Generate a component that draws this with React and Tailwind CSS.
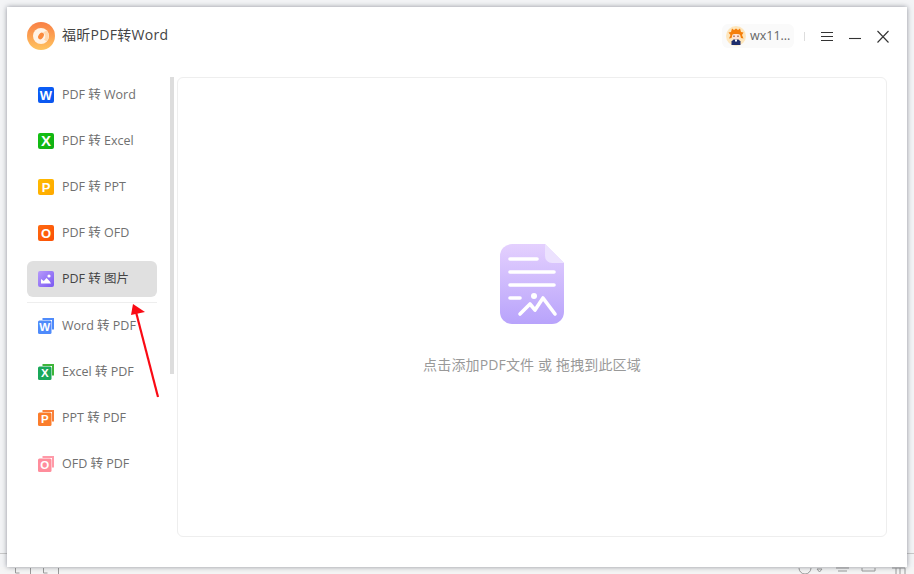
const cjk = { fontFamily: '"Open Sans", "Noto Sans CJK SC", sans-serif' };

const SolidIcon = ({ from, to, letter }) => (
  <svg width="16" height="16" viewBox="0 0 16 16" className="shrink-0">
    <defs>
      <linearGradient id={`solid-${letter}`} x1="0" y1="0" x2="1" y2="1">
        <stop offset="0" stopColor={from} />
        <stop offset="1" stopColor={to} />
      </linearGradient>
    </defs>
    <rect width="16" height="16" rx="2" fill={`url(#solid-${letter})`} />
    <text x="8" y="13" textAnchor="middle" fontSize={letter === 'X' ? 15 : 13} fontWeight="700" fill="#fff" fontFamily="Liberation Sans, sans-serif">{letter}</text>
  </svg>
);

const ImageIcon = () => (
  <svg width="16" height="16" viewBox="0 0 16 16" className="shrink-0">
    <defs>
      <linearGradient id="img-icon" x1="0" y1="0" x2="1" y2="1">
        <stop offset="0" stopColor="#b79bfb" />
        <stop offset="1" stopColor="#7a58f2" />
      </linearGradient>
    </defs>
    <rect width="16" height="16" rx="2" fill="url(#img-icon)" />
    <circle cx="11" cy="5" r="1.600" fill="#fff" />
    <path d="M3 12.500V8l2.800 2L8.500 7l3 3 1.500 2.500z" fill="#fff" />
  </svg>
);

const FrameIcon = ({ color, light, letter }) => (
  <svg width="16" height="16" viewBox="0 0 16 16" className="shrink-0">
    <path d="M4.500 1h10.500v10.500" fill="none" stroke={light} strokeWidth="2" />
    <rect x="0" y="2.500" width="13.500" height="13.500" rx="1.500" fill={color} />
    <text x="6.800" y="13.400" textAnchor="middle" fontSize="11.500" fontWeight="700" fill="#fff" fontFamily="Liberation Sans, sans-serif">{letter}</text>
  </svg>
);

const topItems = [
  { label: 'PDF 转 Word', icon: <SolidIcon from="#0a5ff8" to="#0b55ee" letter="W" /> },
  { label: 'PDF 转 Excel', icon: <SolidIcon from="#14c214" to="#0fae12" letter="X" /> },
  { label: 'PDF 转 PPT', icon: <SolidIcon from="#ffbb00" to="#ffa800" letter="P" /> },
  { label: 'PDF 转 OFD', icon: <SolidIcon from="#ff6a10" to="#fb5005" letter="O" /> },
  { label: 'PDF 转 图片', icon: <ImageIcon />, active: true },
];

const bottomItems = [
  { label: 'Word 转 PDF', icon: <FrameIcon color="#4f8bfb" light="#4f8bfb" letter="W" /> },
  { label: 'Excel 转 PDF', icon: <FrameIcon color="#1aa85a" light="#3fb53a" letter="X" /> },
  { label: 'PPT 转 PDF', icon: <FrameIcon color="#fb7d2c" light="#f9803a" letter="P" /> },
  { label: 'OFD 转 PDF', icon: <FrameIcon color="#ff8d9c" light="#ff9aa8" letter="O" /> },
];

const NavItem = ({ label, icon, active }) => (
  <div className={`flex h-9 w-[130px] items-center gap-2 rounded-md pl-[11px] text-[12.5px] ${active ? 'bg-[#e0e0e0] text-[#444]' : 'text-[#707070]'}`}>
    {icon}
    <span className="whitespace-nowrap">{label}</span>
  </div>
);

const Logo = () => (
  <svg width="28" height="28" viewBox="0 0 28 28" className="shrink-0">
    <defs>
      <linearGradient id="logo-bg" x1="0.5" y1="0" x2="0.5" y2="1">
        <stop offset="0" stopColor="#f97f45" />
        <stop offset="1" stopColor="#ffc45f" />
      </linearGradient>
    </defs>
    <circle cx="14" cy="14" r="14" fill="url(#logo-bg)" />
    <circle cx="14" cy="14" r="8" fill="#fff3e6" />
    <path d="M19.500 8.500a8 8 0 0 1 0 11l-2.500-2a4.500 4.500 0 0 0-1-7z" fill="#ffd9b0" />
    <ellipse cx="14" cy="14" rx="2.400" ry="3.600" transform="rotate(35 14 14)" fill="#fb8a3c" />
  </svg>
);

const Avatar = () => (
  <svg width="20" height="20" viewBox="0 0 20 20" className="shrink-0">
    <circle cx="10" cy="10" r="10" fill="#fde6bd" />
    <path d="M2.500 6.500l2.500-.5 1-3.500 2 1.500 2-1.500 2 1.500 2-1.500 1 3.500 2.500.5-1.500 2.500 1.500 3.500-2.500-.5-1-3.500H6.500l-1 3.500-2.500.5 1.500-3.500z" fill="#f57f0a" />
    <rect x="6.500" y="8" width="7" height="5" rx="2" fill="#ffe3d6" />
    <rect x="7.500" y="9.500" width="1" height="1.500" fill="#7a3b1a" />
    <rect x="11.500" y="9.500" width="1" height="1.500" fill="#7a3b1a" />
    <path d="M5.500 19v-3.500l2-2h5l2 2V19z" fill="#1f2f6e" />
    <rect x="9" y="13.500" width="2" height="2" fill="#fff" />
  </svg>
);

const DocIcon = () => (
  <svg width="64" height="80" viewBox="0 0 64 80">
    <defs>
      <linearGradient id="doc-bg" x1="0.5" y1="0" x2="0.5" y2="1">
        <stop offset="0" stopColor="#e4d0fe" />
        <stop offset="1" stopColor="#b8a3fb" />
      </linearGradient>
    </defs>
    <path d="M12 0h33l19 19v49a12 12 0 0 1-12 12H12A12 12 0 0 1 0 68V12A12 12 0 0 1 12 0z" fill="url(#doc-bg)" />
    <path d="M45 0l19 19H52a7 7 0 0 1-7-7z" fill="#ece2fe" />
    <g stroke="#fff" strokeWidth="3.600" strokeLinecap="round" fill="none">
      <path d="M10 15h27" />
      <path d="M10 28h44" />
      <path d="M10 41h44" />
      <path d="M10 54h10" />
      <path d="M20 70l10-10 5 6 8-12 12 16" strokeLinejoin="round" />
    </g>
    <circle cx="34" cy="52" r="3" fill="#fff" />
  </svg>
);

export default function App() {
  return (
    <div className="relative h-[574px] w-[914px] overflow-hidden bg-[#f3f4f6] pl-[7px] pt-[7px]" style={cjk}>
      {/* app underneath the window */}
      <div className="absolute left-0 top-[553px] h-px w-full bg-[#c8c8c8]" />
      <div className="absolute bottom-0 left-0 flex h-[7px] w-full items-center bg-[#f5f5f5]">
        <svg width="914" height="7" viewBox="0 0 914 7" fill="none" stroke="#9a9a9a">
          <path d="M15.500 1v5h4M30.500 1v6M43.500 1v5h4M58.500 1v6" />
          <path d="M799 1a6 6 0 0 0 12 0M822 2h-5l2.500 3z" />
          <path d="M836 1h13M838 4h9M862 1v3h13v-3M892 1h13v6M896 1v6M900 1v6" />
        </svg>
      </div>

      <div className="relative flex h-[560px] w-[900px] flex-col bg-white shadow-[0_0_5px_rgba(60,65,80,0.55)]">
        <header className="flex h-[70px] shrink-0 items-start pl-5 pr-[18px] pt-[15px]">
          <Logo />
          <span className="ml-[7px] mt-[3px] text-sm tracking-[0.3px] text-[#444]">福昕PDF转Word</span>
          <div className="ml-auto mt-[2px] flex h-6 w-[72px] items-center gap-1 rounded-md bg-[#fafafa] pl-1">
            <Avatar />
            <span className="text-[12.5px] text-[#666]">wx11...</span>
          </div>
          <div className="ml-[10px] mt-[10px] h-[9px] w-px bg-[#ddd]" />
          <svg width="68" height="14" viewBox="0 0 68 14" className="ml-4 mt-2 text-[#333]" fill="none" stroke="currentColor" strokeWidth="1.100">
            <path d="M0 2.500h12M0 6.500h12M0 10.500h12" />
            <path d="M28 8.500h12" />
            <path d="M56.500 1l11 11.500M67.500 1l-11 11.500" />
          </svg>
        </header>

        <div className="flex min-h-0 flex-1 pl-5 pr-5">
          <aside className="flex w-[143px] shrink-0 items-start">
            <nav className="flex w-[130px] shrink-0 flex-col">
              <div className="flex flex-col gap-[10px]">
                {topItems.map((item) => <NavItem key={item.label} {...item} />)}
              </div>
              <div className="mt-[5px] h-px bg-[#eee]" />
              <div className="mt-[5px] flex flex-col gap-[10px]">
                {bottomItems.map((item) => <NavItem key={item.label} {...item} />)}
              </div>
            </nav>
            <div className="ml-[13px] h-[297px] w-1 shrink-0 bg-[#ddd]" />
          </aside>

          <main className="mb-[30px] ml-[7px] flex h-[460px] w-[710px] flex-col items-center rounded-md border border-[#eee] bg-white pt-[166px]">
            <DocIcon />
            <p className="mt-[30px] text-[14px] tracking-[0.15px] text-[#999]">点击添加PDF文件 或 拖拽到此区域</p>
          </main>
        </div>
      </div>

      {/* red annotation arrow */}
      <svg width="914" height="574" viewBox="0 0 914 574" className="pointer-events-none absolute left-0 top-0">
        <path d="M158 397L136 312" stroke="#fa0a14" strokeWidth="2.200" />
        <path d="M133 304L131 315L145 312z" fill="#fa0a14" />
      </svg>
    </div>
  );
}
